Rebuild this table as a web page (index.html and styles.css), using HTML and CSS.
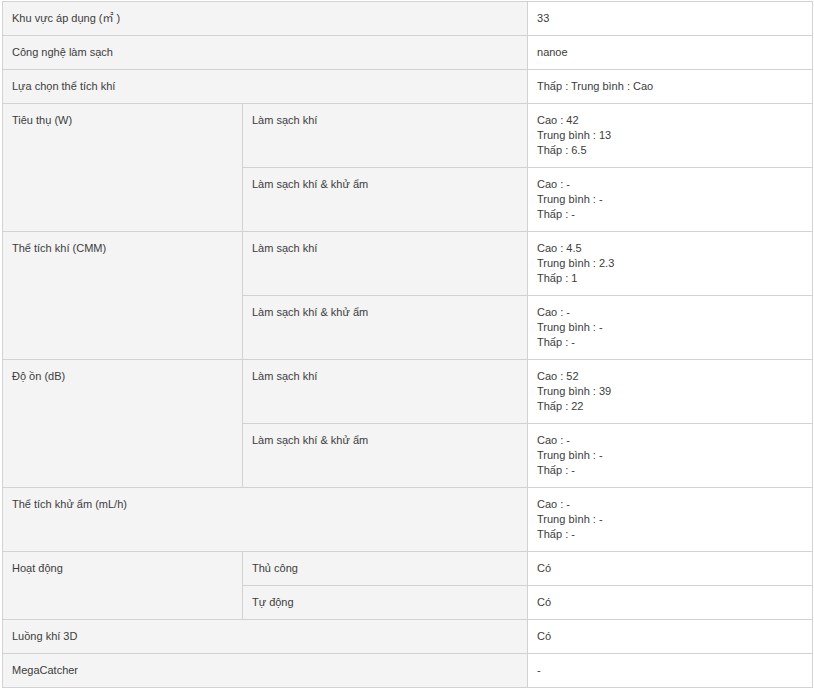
FILE: index.html
```html
<!DOCTYPE html>
<html lang="vi">
<head>
<meta charset="utf-8">
<link rel="stylesheet" href="styles.css">
</head>
<body>
<div class="wrap">
<table class="spec">
  <colgroup><col class="c1"><col class="c2"><col class="c3"></colgroup>
  <tr><td class="lbl" colspan="2">Khu vực áp dụng (<span class="unit">㎡</span> )</td><td>33</td></tr>
  <tr><td class="lbl" colspan="2">Công nghệ làm sạch</td><td>nanoe</td></tr>
  <tr><td class="lbl" colspan="2">Lựa chọn thể tích khí</td><td>Thấp : Trung bình : Cao</td></tr>
  <tr><td class="lbl" rowspan="2">Tiêu thụ (W)</td><td class="lbl">Làm sạch khí</td><td>Cao : 42<br>Trung bình : 13<br>Thấp : 6.5</td></tr>
  <tr><td class="lbl">Làm sạch khí &amp; khử ẩm</td><td>Cao : -<br>Trung bình : -<br>Thấp : -</td></tr>
  <tr><td class="lbl" rowspan="2">Thể tích khí (CMM)</td><td class="lbl">Làm sạch khí</td><td>Cao : 4.5<br>Trung bình : 2.3<br>Thấp : 1</td></tr>
  <tr><td class="lbl">Làm sạch khí &amp; khử ẩm</td><td>Cao : -<br>Trung bình : -<br>Thấp : -</td></tr>
  <tr><td class="lbl" rowspan="2">Độ ồn (dB)</td><td class="lbl">Làm sạch khí</td><td>Cao : 52<br>Trung bình : 39<br>Thấp : 22</td></tr>
  <tr><td class="lbl">Làm sạch khí &amp; khử ẩm</td><td>Cao : -<br>Trung bình : -<br>Thấp : -</td></tr>
  <tr><td class="lbl" colspan="2">Thể tích khử ẩm (mL/h)</td><td>Cao : -<br>Trung bình : -<br>Thấp : -</td></tr>
  <tr><td class="lbl" rowspan="2">Hoạt động</td><td class="lbl">Thủ công</td><td>Có</td></tr>
  <tr><td class="lbl">Tự động</td><td>Có</td></tr>
  <tr><td class="lbl" colspan="2">Luồng khí 3D</td><td>Có</td></tr>
  <tr><td class="lbl" colspan="2">MegaCatcher</td><td>-</td></tr>
</table>
</div>
</body>
</html>
```
FILE: styles.css
```css
html, body {
  margin: 0;
  padding: 0;
  background: #fff;
}
.wrap {
  padding: 1px 2px 0 2px;
}
.spec {
  width: 810px;
  border-collapse: collapse;
  table-layout: fixed;
  font-family: "Liberation Sans", Arial, "DejaVu Sans", sans-serif;
  font-size: 11px;
  line-height: 15px;
  color: #3c3c3c;
}
.c1 { width: 240px; }
.c2 { width: 285px; }
.c3 { width: 285px; }
.spec td {
  border: 1px solid #d2d2d2;
  padding: 9px 9px 9px 9px;
  vertical-align: top;
  background: #fff;
}
.spec td.lbl {
  background: #f4f4f4;
}
.unit {
  font-family: "Noto Sans CJK SC", sans-serif;
  font-size: 11px;
  line-height: 0;
}
```
